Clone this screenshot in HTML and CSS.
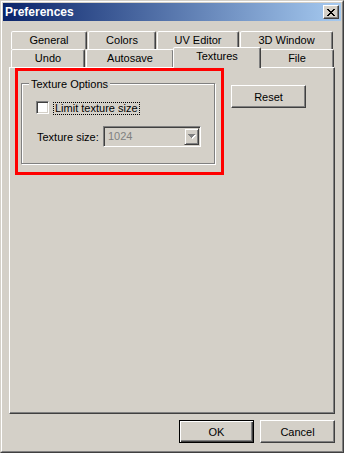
FILE: index.html
```html
<!DOCTYPE html>
<html>
<head>
<meta charset="utf-8">
<title>Preferences</title>
<link rel="stylesheet" href="styles.css">
</head>
<body>
<div class="window">
  <div class="frame">
    <div class="titlebar">
      <span class="title">Preferences</span>
      <button class="close" type="button" aria-label="Close">
        <svg width="8" height="7" viewBox="0 0 8 7" shape-rendering="crispEdges">
          <path fill="#000" d="M0 0h2v1H0zM6 0h2v1H6zM1 1h2v1H1zM5 1h2v1H5zM2 2h4v1H2zM3 3h2v1H3zM2 4h4v1H2zM1 5h2v1H1zM5 5h2v1H5zM0 6h2v1H0zM6 6h2v1H6z"/>
        </svg>
      </button>
    </div>
    <div class="content">
      <div class="tabs">
        <div class="tabrow">
          <div class="tab t-general">General</div>
          <div class="tab t-colors">Colors</div>
          <div class="tab t-uv">UV Editor</div>
          <div class="tab t-3d">3D Window</div>
        </div>
        <div class="tabrow">
          <div class="tab t-undo">Undo</div>
          <div class="tab t-autosave">Autosave</div>
          <div class="tab t-textures active">Textures</div>
          <div class="tab t-file">File</div>
        </div>
      </div>
      <div class="panel">
        <div class="highlight">
          <div class="group">
            <span class="legend">Texture Options</span>
            <div class="check-row">
              <span class="checkbox"></span>
              <span class="check-label">Limit texture size</span>
            </div>
            <div class="field-row">
              <span class="field-label">Texture size:</span>
              <div class="combo">
                <span class="combo-value">1024</span>
                <span class="combo-btn">
                  <svg width="8" height="5" viewBox="0 0 8 5" shape-rendering="crispEdges">
                    <path fill="#fff" d="M1 1h7v1H1zM2 2h5v1H2zM3 3h3v1H3zM4 4h1v1H4z"/>
                    <path fill="#808080" d="M0 0h7v1H0zM1 1h5v1H1zM2 2h3v1H2zM3 3h1v1H3z"/>
                  </svg>
                </span>
              </div>
            </div>
          </div>
        </div>
        <button class="btn reset" type="button">Reset</button>
      </div>
      <div class="actions">
        <button class="btn default" type="button">OK</button>
        <button class="btn" type="button">Cancel</button>
      </div>
    </div>
  </div>
</div>
</body>
</html>
```
FILE: styles.css
```css
* {
  box-sizing: border-box;
}

html, body {
  margin: 0;
  background: #d4d0c8;
}

body {
  font: 11px "Liberation Sans", Arial, sans-serif;
  color: #000;
}

.window {
  width: 344px;
  height: 453px;
  border: 1px solid;
  border-color: #d4d0c8 #404040 #404040 #d4d0c8;
  background: #d4d0c8;
}

.frame {
  height: 100%;
  border: 1px solid;
  border-color: #fff #808080 #808080 #fff;
  padding: 1px;
  display: flex;
  flex-direction: column;
}

.titlebar {
  height: 18px;
  flex: none;
  background: linear-gradient(to right, #0a246a, #a6caf0);
  display: flex;
  align-items: center;
  justify-content: space-between;
  padding: 0 2px;
}

.title {
  color: #fff;
  font-weight: bold;
  font-size: 12px;
  line-height: 18px;
}

.close {
  width: 16px;
  height: 14px;
  padding: 0;
  margin: 0;
  border: 1px solid;
  border-color: #fff #404040 #404040 #fff;
  box-shadow: inset -1px -1px 0 #808080;
  background: #d4d0c8;
  display: flex;
  align-items: center;
  justify-content: center;
}

.content {
  flex: 1;
  padding: 10px 6px 7px;
  display: flex;
  flex-direction: column;
}

.tabs {
  padding-left: 2px;
}

.tabrow {
  display: flex;
  gap: 1px;
  height: 18px;
}

.tab {
  height: 18px;
  flex: none;
  border: 1px solid;
  border-bottom: none;
  border-color: #fff #404040 transparent #fff;
  box-shadow: inset -1px 0 0 #808080;
  border-radius: 2px 2px 0 0;
  background: #d4d0c8;
  text-align: center;
  line-height: 17px;
  white-space: nowrap;
}

.t-general { width: 76px; }
.t-colors { width: 68px; }
.t-uv { width: 82px; }
.t-3d { width: 93px; }
.t-undo { width: 74px; }
.t-autosave { width: 88px; }
.t-textures { width: 84px; }
.t-file { width: 74px; }

.tab.active {
  width: 88px;
  height: 21px;
  margin: -2px -2px -1px;
  position: relative;
  z-index: 1;
}

.panel {
  height: 347px;
  flex: none;
  border: 1px solid;
  border-color: #fff #404040 #404040 #fff;
  box-shadow: inset -1px -1px 0 #808080;
  display: flex;
  align-items: flex-start;
  padding-left: 5px;
}

.highlight {
  width: 209px;
  height: 107px;
  flex: none;
  border: 3px solid #ff0000;
  padding: 12px 0 0 3px;
}

.group {
  position: relative;
  width: 194px;
  height: 81px;
  border: 1px solid #808080;
  box-shadow: 1px 1px 0 #fff, inset 1px 1px 0 #fff;
  padding: 17px 0 0 14px;
}

.legend {
  position: absolute;
  left: 7px;
  top: -6px;
  padding: 0 2px;
  background: #d4d0c8;
  line-height: 13px;
  white-space: nowrap;
}

.check-row {
  display: flex;
  align-items: flex-start;
  height: 14px;
}

.checkbox {
  width: 13px;
  height: 13px;
  flex: none;
  background: #fff;
  border: 1px solid;
  border-color: #808080 #fff #fff #808080;
  box-shadow: inset 1px 1px 0 #404040, inset -1px -1px 0 #d4d0c8;
}

.check-label {
  margin: 1px 0 0 4px;
  border: 1px dotted #000;
  padding: 0 1px;
  height: 13px;
  line-height: 11px;
  white-space: nowrap;
}

.field-row {
  display: flex;
  align-items: center;
  margin-top: 11px;
}

.field-label {
  width: 66px;
  margin-left: 1px;
  flex: none;
  white-space: nowrap;
}

.combo {
  width: 98px;
  height: 21px;
  flex: none;
  border: 1px solid;
  border-color: #808080 #fff #fff #808080;
  box-shadow: inset 1px 1px 0 #404040, inset -1px -1px 0 #d4d0c8;
  padding: 1px;
  display: flex;
}

.combo-value {
  flex: 1;
  color: #808080;
  padding-left: 3px;
  line-height: 17px;
}

.combo-btn {
  width: 15px;
  height: 17px;
  flex: none;
  border: 1px solid;
  border-color: #d4d0c8 #404040 #404040 #d4d0c8;
  box-shadow: inset 1px 1px 0 #fff, inset -1px -1px 0 #808080;
  display: flex;
  align-items: center;
  justify-content: center;
}

.btn {
  width: 75px;
  height: 23px;
  flex: none;
  margin: 0;
  padding: 0;
  border: 1px solid;
  border-color: #fff #404040 #404040 #fff;
  box-shadow: inset -1px -1px 0 #808080;
  background: #d4d0c8;
  font: inherit;
  color: #000;
}

.btn.default {
  border-color: #000;
  box-shadow: inset 1px 1px 0 #fff, inset -1px -1px 0 #404040, inset -2px -2px 0 #808080;
}

.reset {
  margin: 17px 0 0 7px;
}

.actions {
  display: flex;
  justify-content: flex-end;
  gap: 6px;
  margin-top: 6px;
}
```
